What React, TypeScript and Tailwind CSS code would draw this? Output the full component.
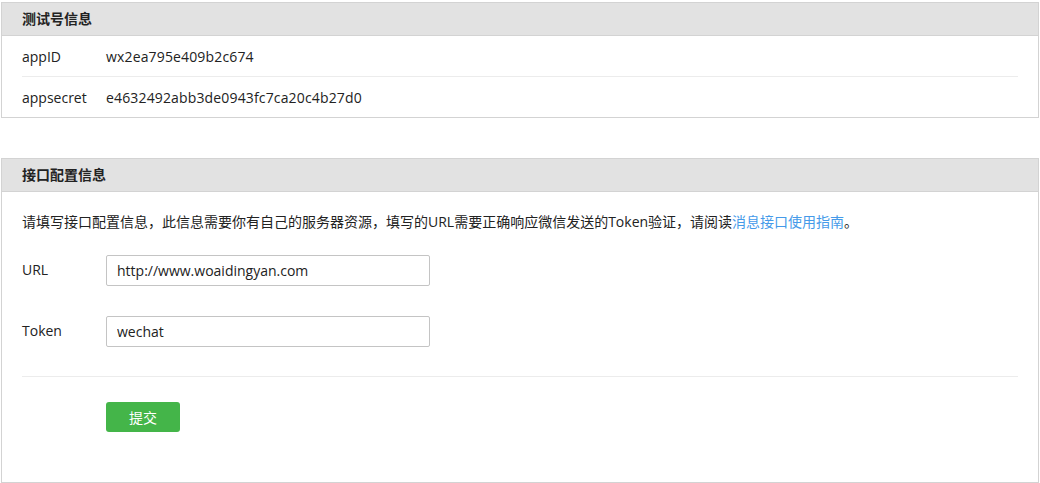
import React from "react";

const font = {
  fontFamily: '"Open Sans", "Noto Sans CJK SC", sans-serif',
};

function Panel({ title, children }: { title: string; children: React.ReactNode }) {
  return (
    <div className="ml-[1px] w-[1038px] border border-[#d3d3d3] bg-white">
      <div className="h-[33px] border-b border-[#d3d3d3] bg-[#e2e2e2] px-[20px] text-[14px] font-bold leading-[32px] text-[#222]">
        {title}
      </div>
      {children}
    </div>
  );
}

const infoRows = [
  { label: "appID", value: "wx2ea795e409b2c674" },
  { label: "appsecret", value: "e4632492abb3de0943fc7ca20c4b27d0" },
];

export default function App() {
  return (
    <div className="min-h-screen bg-white pt-[2px] text-[14px] text-[#222]" style={font}>
      <Panel title="测试号信息">
        <div className="px-[20px]">
          {infoRows.map((row, i) => (
            <div
              key={row.label}
              className={`flex items-center ${i === 0 ? "h-[41px] border-b border-[#ececec]" : "h-[40px]"}`}
            >
              <span className="w-[84px]">{row.label}</span>
              <span className="tracking-[0.15px]">{row.value}</span>
            </div>
          ))}
        </div>
      </Panel>

      <div className="h-[40px]" />

      <Panel title="接口配置信息">
        <div className="px-[20px] pt-[20px] pb-[50px]">
          <p className="leading-5">
            请填写接口配置信息，此信息需要你有自己的服务器资源，填写的URL需要正确响应微信发送的Token验证，请阅读
            <a className="text-[#459ae9]">消息接口使用指南</a>。
          </p>

          <div className="mt-[23px] flex items-center">
            <label className="w-[84px] -translate-y-[1px]">URL</label>
            <input
              readOnly
              value="http://www.woaidingyan.com"
              className="h-[31px] w-[324px] rounded-[2px] border border-[#c4c4c4] px-[10px] text-[14px] text-[#222] outline-none"
              style={font}
            />
          </div>

          <div className="mt-[30px] flex items-center">
            <label className="w-[84px] -translate-y-[1px]">Token</label>
            <input
              readOnly
              value="wechat"
              className="h-[31px] w-[324px] rounded-[2px] border border-[#c4c4c4] px-[10px] text-[14px] text-[#222] outline-none"
              style={font}
            />
          </div>

          <div className="mt-[29px] border-t border-[#ececec]" />

          <div className="mt-[25px] pl-[84px]">
            <button className="h-[30px] w-[74px] rounded-[3px] bg-[#44b549] text-[14px] text-white">
              提交
            </button>
          </div>
        </div>
      </Panel>
    </div>
  );
}
